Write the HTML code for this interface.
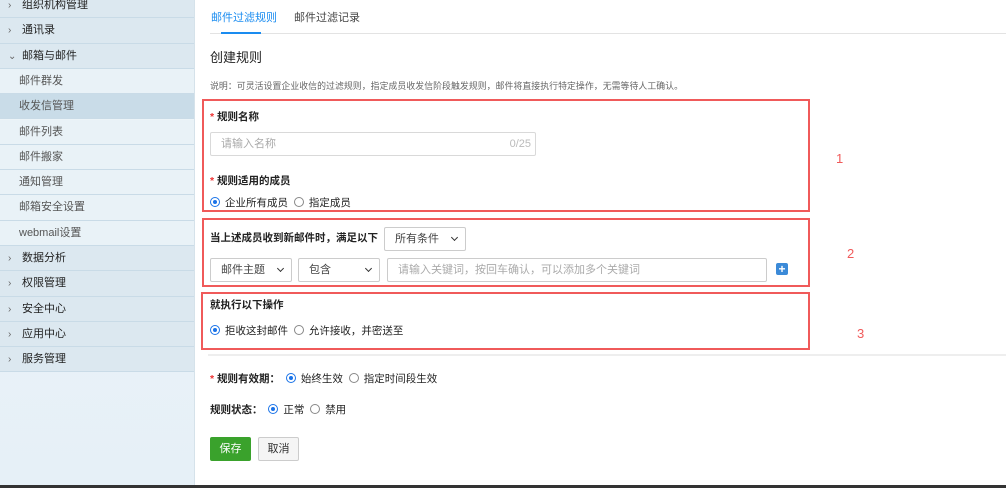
<!DOCTYPE html>
<html><head><meta charset="utf-8"><style>
*{box-sizing:border-box;margin:0;padding:0}
body{width:1006px;height:488px;overflow:hidden;background:#fff;font-family:"Liberation Sans","Noto Sans CJK SC",sans-serif;position:relative;color:#333}
#sb{position:absolute;left:0;top:0;width:195px;height:485px;background:linear-gradient(#eef5f9,#e6f0f7);border-right:1px solid #d5e2ea}
.r{position:absolute;left:0;width:194px;height:25.3px;border-bottom:1px solid #c9dbe7;font-size:11px;line-height:25px;padding-left:19px}
.t{background:#dce8f0;color:#222;padding-left:8px}
.t i{font-style:normal;color:#666;font-size:10px;display:inline-block;width:14px}
.s{background:#e9f2f7;color:#555}
.sel{background:#c9dce8}
.a{position:absolute;white-space:nowrap}
.rb{position:absolute;border:2px solid #f05a5a}
.in{position:absolute;border:1px solid #d9d9d9;border-radius:2px;background:#fff;font-size:11px;color:#aaa;padding-left:10px;line-height:22px}
.sl{position:absolute;border:1px solid #ccc;border-radius:2px;background:#fff;font-size:11px;color:#444;padding-left:10px;line-height:22px}
.sl:after{content:"";position:absolute;right:8px;top:7px;width:4px;height:4px;border-right:1.5px solid #333;border-bottom:1.5px solid #333;transform:rotate(45deg)}
.rad{display:inline-block;width:10px;height:10px;border:1px solid #888;border-radius:50%;vertical-align:-1px;margin-right:5px;position:relative}
.on{border-color:#1a73e8}
.on:after{content:"";position:absolute;left:2px;top:2px;width:4px;height:4px;border-radius:50%;background:#1a73e8}
.f{font-size:10.5px;color:#222}
.b{font-weight:bold;font-size:10.5px;color:#222}
.st{color:#e33}
.n{position:absolute;color:#f05a5a;font-size:13px}
</style></head><body>
<div id="sb">
<div class="r t" style="top:-7px"><i>›</i>组织机构管理</div>
<div class="r t" style="top:18.3px"><i>›</i>通讯录</div>
<div class="r t" style="top:43.6px"><i>⌄</i>邮箱与邮件</div>
<div class="r s" style="top:68.9px">邮件群发</div>
<div class="r s sel" style="top:94.2px">收发信管理</div>
<div class="r s" style="top:119.5px">邮件列表</div>
<div class="r s" style="top:144.8px">邮件搬家</div>
<div class="r s" style="top:170.1px">通知管理</div>
<div class="r s" style="top:195.4px">邮箱安全设置</div>
<div class="r s" style="top:220.7px">webmail设置</div>
<div class="r t" style="top:246px"><i>›</i>数据分析</div>
<div class="r t" style="top:271.3px"><i>›</i>权限管理</div>
<div class="r t" style="top:296.6px"><i>›</i>安全中心</div>
<div class="r t" style="top:321.9px"><i>›</i>应用中心</div>
<div class="r t" style="top:347.2px"><i>›</i>服务管理</div>
</div>
<div style="position:absolute;left:0;top:485px;width:1006px;height:3px;background:#333"></div>

<div class="a" style="left:211px;top:9px;font-size:11px;color:#1a8cf0">邮件过滤规则</div>
<div class="a" style="left:294px;top:9px;font-size:11px;color:#444">邮件过滤记录</div>
<div class="a" style="left:210px;top:33px;width:796px;height:1px;background:#e3e3e3"></div>
<div class="a" style="left:221px;top:32px;width:40px;height:2px;background:#1a8cf0"></div>
<div class="a" style="left:210px;top:47px;font-size:13px;color:#222">创建规则</div>
<div class="a" style="left:210px;top:79px;font-size:8.9px;color:#666;letter-spacing:0.05px">说明：可灵活设置企业收信的过滤规则，指定成员收发信阶段触发规则，邮件将直接执行特定操作，无需等待人工确认。</div>

<div class="rb" style="left:202px;top:99px;width:608px;height:113px"></div>
<div class="a b" style="left:210px;top:109px"><span class="st">* </span>规则名称</div>
<div class="in" style="left:210px;top:132px;width:326px;height:24px">请输入名称<span style="position:absolute;right:4px;color:#bbb">0/25</span></div>
<div class="a b" style="left:210px;top:173px"><span class="st">* </span>规则适用的成员</div>
<div class="a f" style="left:210px;top:195px"><span class="rad on"></span>企业所有成员 &nbsp;<span class="rad"></span>指定成员</div>

<div class="rb" style="left:202px;top:218px;width:608px;height:69px"></div>
<div class="a b" style="left:210px;top:230px">当上述成员收到新邮件时，满足以下</div>
<div class="sl" style="left:384px;top:227px;width:82px;height:24px">所有条件</div>
<div class="sl" style="left:210px;top:258px;width:82px;height:24px">邮件主题</div>
<div class="sl" style="left:298px;top:258px;width:82px;height:24px">包含</div>
<div class="in" style="left:387px;top:258px;width:380px;height:24px;border-color:#ccc">请输入关键词，按回车确认，可以添加多个关键词</div>
<div class="a" style="left:776px;top:263px;width:12px;height:12px;background:#3b8ad8;border-radius:2px;color:#fff;font-size:12px;line-height:12px;text-align:center;font-weight:bold">+</div>

<div class="rb" style="left:201px;top:292px;width:609px;height:58px"></div>
<div class="a b" style="left:210px;top:297px">就执行以下操作</div>
<div class="a f" style="left:210px;top:323px"><span class="rad on"></span>拒收这封邮件 &nbsp;<span class="rad"></span>允许接收，并密送至</div>
<div class="a" style="left:208px;top:354px;width:798px;height:2px;background:#eee"></div>

<div class="n" style="left:836px;top:151px">1</div>
<div class="n" style="left:847px;top:246px">2</div>
<div class="n" style="left:857px;top:326px">3</div>

<div class="a f" style="left:210px;top:371px"><b><span class="st">* </span>规则有效期：</b> &nbsp;<span class="rad on"></span>始终生效 &nbsp;<span class="rad"></span>指定时间段生效</div>
<div class="a f" style="left:210px;top:402px"><b>规则状态：</b> &nbsp;<span class="rad on"></span>正常 &nbsp;<span class="rad"></span>禁用</div>
<div class="a" style="left:210px;top:437px;width:41px;height:24px;background:#3aa22c;border-radius:2px;color:#fff;font-size:11px;line-height:24px;text-align:center">保存</div>
<div class="a" style="left:258px;top:437px;width:41px;height:24px;background:#f5f5f5;border:1px solid #ccc;border-radius:2px;color:#333;font-size:11px;line-height:22px;text-align:center">取消</div>
</body></html>
